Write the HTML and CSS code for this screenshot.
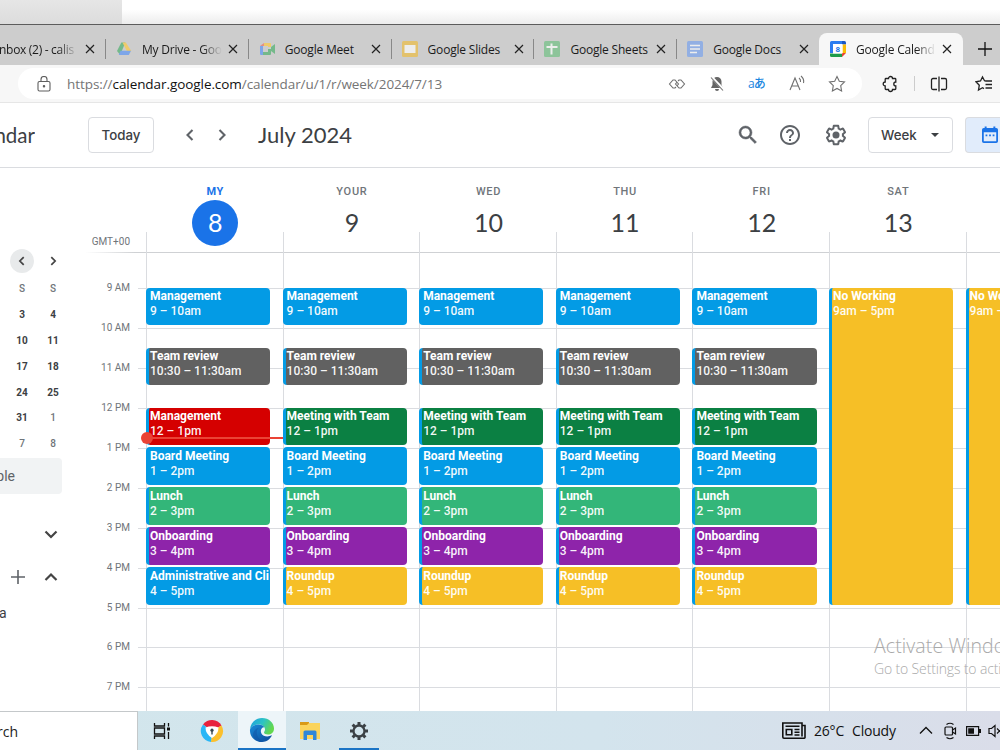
FILE: index.html
```html
<!DOCTYPE html>
<html lang="en">
<head>
  <meta charset="UTF-8" />
  <meta name="viewport" content="width=device-width,initial-scale=1.0"/>
  <title>Google Calendar - July 2024</title>
  <link rel="stylesheet" href="styles.css">
</head>
<body>
  <div class="desktop-strip"><div class="strip-left"></div></div>

  <!-- Browser tabs -->
  <div class="tabs">
    <div class="tab tab-first"><span class="tab-title fade">Inbox (2) - calis</span><svg class="close" viewBox="0 0 10 10"><path d="M1 1l8 8M9 1L1 9"/></svg></div>
    <div class="tab">
      <svg class="favicon" viewBox="0 0 16 16"><path fill="#74b98a" d="M5.3 1.5h4L4.2 14 1 10z"/><path fill="#efcb6b" d="M6.5 1.5h3.300L15.300 10h-4.500z"/><path fill="#7ea6e8" d="M4.600 9.800H15L12.800 14H2.800z"/></svg>
      <span class="tab-title fade">My Drive - Goo</span><svg class="close" viewBox="0 0 10 10"><path d="M1 1l8 8M9 1L1 9"/></svg>
    </div>
    <div class="tab">
      <svg class="favicon" viewBox="0 0 16 16"><path fill="#7ea6e8" d="M1 5h3v9H2a1 1 0 0 1-1-1z"/><path fill="#e58e84" d="M1 5l4-3v3z"/><path fill="#efcb6b" d="M5 2h6a1 1 0 0 1 1 1v3H9V5H5z"/><path fill="#74b98a" d="M12 6l4-3v10l-4-3z"/><path fill="#74b98a" d="M4 11h5V8h3v5a1 1 0 0 1-1 1H4z"/></svg>
      <span class="tab-title">Google Meet</span><svg class="close" viewBox="0 0 10 10"><path d="M1 1l8 8M9 1L1 9"/></svg>
    </div>
    <div class="tab">
      <svg class="favicon" viewBox="0 0 16 16"><rect width="16" height="16" rx="1.500" fill="#e3c26d"/><rect x="2.500" y="4" width="11" height="8" fill="#ededed"/></svg>
      <span class="tab-title">Google Slides</span><svg class="close" viewBox="0 0 10 10"><path d="M1 1l8 8M9 1L1 9"/></svg>
    </div>
    <div class="tab">
      <svg class="favicon" viewBox="0 0 16 16"><rect width="16" height="16" rx="1.500" fill="#8dc49a"/><path d="M7.500 2.500v11M2.500 6h11" stroke="#ededed" stroke-width="2"/></svg>
      <span class="tab-title">Google Sheets</span><svg class="close" viewBox="0 0 10 10"><path d="M1 1l8 8M9 1L1 9"/></svg>
    </div>
    <div class="tab no-line">
      <svg class="favicon" viewBox="0 0 16 16"><rect width="16" height="16" rx="1.500" fill="#92afe3"/><path d="M3 4.500h10M3 8h10M3 11.500h7" stroke="#ededed" stroke-width="1.600"/></svg>
      <span class="tab-title">Google Docs</span><svg class="close" viewBox="0 0 10 10"><path d="M1 1l8 8M9 1L1 9"/></svg>
    </div>
    <div class="tab active">
      <svg class="favicon" viewBox="0 0 16 16"><path fill="#2b7cf0" d="M1.500 0H12v3.500H3.500V12H0V1.500A1.500 1.500 0 0 1 1.500 0z"/><path fill="#1a56c4" d="M12 0h2.500A1.500 1.500 0 0 1 16 1.500v2h-4z"/><path fill="#fbbc04" d="M12.500 3.500H16V12h-3.500z"/><path fill="#1e9c4b" d="M0 12.500h12V16H1.500A1.500 1.500 0 0 1 0 14.500z"/><path fill="#ea4335" d="M12 12h4l-4 4z"/><path fill="#fff" d="M3 3h9.500v9.500H3z"/><text x="7.800" y="11" text-anchor="middle" class="fav-num">8</text></svg>
      <span class="tab-title fade">Google Calend</span><svg class="close" viewBox="0 0 10 10"><path d="M1 1l8 8M9 1L1 9"/></svg>
    </div>
    <svg class="new-tab" viewBox="0 0 14 14"><path d="M7 0v14M0 7h14"/></svg>
  </div>

  <!-- Address bar -->
  <div class="toolbar">
    <div class="address">
      <svg class="lock" viewBox="0 0 14 16"><rect x="1" y="5.500" width="12" height="9.500" rx="1.500"/><path d="M4 5.500V3.500a3 3 0 0 1 6 0v2"/><circle cx="7" cy="10.200" r=".7" class="dot"/></svg>
      <span class="url">https://<b>calendar.google.com</b>/calendar/u/1/r/week/2024/7/13</span>
      <div class="address-icons">
        <svg width="18" height="18" viewBox="0 0 18 18"><path d="M8 12l-1 1H5L1.500 9 5 5h2l3.500 4L9.300 10.500M10 6l1-1h2l3.500 4-3.500 4h-2L7.500 9l1.200-1.500"/></svg>
        <svg width="18" height="18" viewBox="0 0 18 18"><path fill="#666" stroke="none" d="M9 2a4.500 4.500 0 0 1 4.500 4.500V10l1.500 3H3l1.500-3V6.500A4.500 4.500 0 0 1 9 2zM7 14h4a2 2 0 0 1-4 0z"/><path stroke="#fff" stroke-width="2.600" d="M3.500 2L16 15"/><path d="M3 2.500L15 15.500"/></svg>
        <span class="translate">aあ</span>
        <svg width="18" height="18" viewBox="0 0 18 18"><path d="M2 15L7 3l5 12M3.800 11h6.400M11 3q2 1.500 1.500 4M13 1q3.500 3 2.500 7"/></svg>
        <svg width="18" height="18" viewBox="0 0 18 18"><path d="M9 1.500l2.300 4.800 5.200.7-3.800 3.700.9 5.300L9 13.500 4.400 16l.9-5.300L1.500 7l5.200-.7z"/></svg>
      </div>
    </div>
    <div class="toolbar-icons">
      <svg width="18" height="18" viewBox="0 0 18 18"><path d="M5 3.500h2.500a2 2 0 0 1 4 0H14a.8.8 0 0 1 .8.8V7a2 2 0 0 0 0 4v2.700a.8.8 0 0 1-.8.8h-2.500a2 2 0 0 1-4 0H5a.8.8 0 0 1-.8-.8V11a2 2 0 0 1 0-4V4.300a.8.8 0 0 1 .8-.8z"/></svg>
      <i class="divider"></i>
      <svg width="18" height="18" viewBox="0 0 18 18"><path d="M7 3.500H3A1.500 1.500 0 0 0 1.500 5v8A1.500 1.500 0 0 0 3 14.500h4M9 1.500v15M11 3.500h4A1.500 1.500 0 0 1 16.500 5v8a1.500 1.500 0 0 1-1.500 1.500h-4"/></svg>
      <svg width="18" height="18" viewBox="0 0 18 18"><path d="M11 6L9.500 5.700 7.500 2 5.500 6 1 6.800l3.300 3.400L3.500 15l4-2.200 1.500.8M10.500 6H17M10.500 9.500H17M10.500 13H17"/></svg>
    </div>
  </div>

  <!-- Calendar header -->
  <header class="header">
    <div class="logo">Calendar</div>
    <button class="btn btn-today">Today</button>
    <svg class="nav-arrow prev" viewBox="0 0 14 14"><path d="M9.500 2L4.500 7l5 5"/></svg>
    <svg class="nav-arrow next" viewBox="0 0 14 14"><path d="M4.500 2l5 5-5 5"/></svg>
    <h1>July 2024</h1>
    <div class="header-right">
      <svg width="24" height="24" viewBox="0 0 24 24"><path stroke="#5f6368" stroke-width=".5" d="M15.500 14h-.79l-.28-.27A6.471 6.471 0 0 0 16 9.500 6.500 6.500 0 1 0 9.500 16c1.610 0 3.090-.59 4.230-1.570l.27.28v.79l5 4.990L20.490 19l-4.990-5zm-6 0C7.010 14 5 11.990 5 9.500S7.010 5 9.500 5 14 7.010 14 9.500 11.990 14 9.500 14z"/></svg>
      <svg width="24" height="24" viewBox="0 0 24 24"><path d="M11 18h2v-2h-2v2zm1-16C6.480 2 2 6.480 2 12s4.480 10 10 10 10-4.480 10-10S17.520 2 12 2zm0 18c-4.410 0-8-3.590-8-8s3.590-8 8-8 8 3.590 8 8-3.590 8-8 8zm0-14c-2.210 0-4 1.790-4 4h2c0-1.100.9-2 2-2s2 .9 2 2c0 2-3 1.750-3 5h2c0-2.250 3-2.500 3-5 0-2.210-1.790-4-4-4z"/></svg>
      <svg width="24" height="24" viewBox="0 0 24 24"><path d="M13.850 22.250h-3.700c-.74 0-1.360-.54-1.450-1.270l-.27-1.890c-.27-.14-.53-.29-.79-.46l-1.800.72c-.7.26-1.470-.03-1.810-.65L2.200 15.530c-.35-.66-.2-1.440.36-1.880l1.530-1.190c-.01-.15-.02-.3-.02-.46 0-.15.01-.31.02-.46l-1.520-1.190c-.59-.45-.74-1.260-.37-1.880l1.850-3.190c.34-.62 1.110-.9 1.790-.63l1.810.73c.26-.17.52-.32.78-.46l.27-1.910c.09-.7.71-1.250 1.440-1.250h3.700c.74 0 1.360.54 1.450 1.270l.27 1.890c.27.14.53.29.79.46l1.800-.72c.71-.26 1.480.03 1.820.65l1.840 3.180c.36.66.2 1.440-.36 1.880l-1.520 1.190c.01.15.02.3.02.46s-.01.31-.02.46l1.520 1.190c.56.45.72 1.230.37 1.860l-1.860 3.220c-.34.62-1.110.9-1.800.63l-1.800-.72c-.26.17-.52.32-.78.46l-.27 1.910c-.1.680-.72 1.220-1.460 1.220zm-3.230-2h2.760l.37-2.550.53-.22c.44-.18.88-.44 1.340-.78l.45-.34 2.380.96 1.380-2.400-2.030-1.580.07-.56c.03-.26.06-.51.06-.78s-.03-.53-.06-.78l-.07-.56 2.030-1.580-1.390-2.400-2.390.96-.45-.35c-.42-.32-.87-.58-1.330-.77l-.52-.22-.37-2.550h-2.760l-.37 2.550-.53.21c-.44.190-.88.44-1.340.79l-.45.33-2.380-.95-1.390 2.390 2.030 1.580-.07.56a7 7 0 0 0-.06.79c0 .26.02.53.06.78l.07.56-2.030 1.580 1.380 2.400 2.390-.96.45.35c.43.33.86.58 1.330.77l.53.22z"/><circle cx="12" cy="12" r="3.500"/></svg>
      <button class="btn btn-week">Week <i class="caret"></i></button>
      <div class="view-switch"><svg width="16" height="18" viewBox="0 0 18 20"><path d="M3 2V.5h2.200V2h7.600V.5H15V2h1a2 2 0 0 1 2 2v13a2 2 0 0 1-2 2H2a2 2 0 0 1-2-2V4a2 2 0 0 1 2-2zM2 7v10h14V7zM4 9.300h2v2H4zm4 0h2v2H8zm4 0h2v2h-2z" fill-rule="evenodd"/></svg></div>
    </div>
  </header>

  <main class="main">
    <aside class="sidebar">
      <div class="mini-cal">
        <span class="mini-nav on"><svg viewBox="0 0 14 14"><path d="M9 2.500L4.500 7 9 11.500"/></svg></span>
        <span class="mini-nav"><svg viewBox="0 0 14 14"><path d="M5 2.500L9.500 7 5 11.500"/></svg></span>
        <span class="dim">S</span><span class="dim">S</span>
        <span>3</span><span>4</span>
        <span>10</span><span>11</span>
        <span>17</span><span>18</span>
        <span>24</span><span>25</span>
        <span>31</span><span class="dim">1</span>
        <span class="dim">7</span><span class="dim">8</span>
      </div>
      <div class="search-people">Search for people</div>
      <div class="side-row"><svg viewBox="0 0 14 14"><path d="M1.500 4.500L7 10l5.500-5.500"/></svg></div>
      <div class="side-row second"><svg class="plus" viewBox="0 0 14 14"><path d="M7 0v14M0 7h14"/></svg><svg viewBox="0 0 14 14"><path d="M1.500 10L7 4.500l5.500 5.500"/></svg></div>
      <div class="side-name">a</div>
    </aside>

    <section class="week">
      <div class="week-head">
        <div class="gmt">GMT+00</div>
        <div class="day-head today"><span>MY</span><b>8</b></div>
        <div class="day-head"><span>YOUR</span><b>9</b></div>
        <div class="day-head"><span>WED</span><b>10</b></div>
        <div class="day-head"><span>THU</span><b>11</b></div>
        <div class="day-head"><span>FRI</span><b>12</b></div>
        <div class="day-head"><span>SAT</span><b>13</b></div>
        <div class="day-head"></div>
      </div>
      <div class="week-body">
        <div class="hours">
          <div class="hour"><span>9 AM</span><i></i></div>
          <div class="hour"><span>10 AM</span><i></i></div>
          <div class="hour"><span>11 AM</span><i></i></div>
          <div class="hour"><span>12 PM</span><i></i></div>
          <div class="hour"><span>1 PM</span><i></i></div>
          <div class="hour"><span>2 PM</span><i></i></div>
          <div class="hour"><span>3 PM</span><i></i></div>
          <div class="hour"><span>4 PM</span><i></i></div>
          <div class="hour"><span>5 PM</span><i></i></div>
          <div class="hour"><span>6 PM</span><i></i></div>
          <div class="hour"><span>7 PM</span><i></i></div>
        </div>
        <div class="days">
          <div class="day">
            <div class="event at-9 blue"><b>Management</b>9 – 10am</div>
            <div class="event at-1030 gray"><b>Team review</b>10:30 – 11:30am</div>
            <div class="event at-12 red"><b>Management</b>12 – 1pm</div>
            <div class="event at-13 blue"><b>Board Meeting</b>1 – 2pm</div>
            <div class="event at-14 mint"><b>Lunch</b>2 – 3pm</div>
            <div class="event at-15 purple"><b>Onboarding</b>3 – 4pm</div>
            <div class="event at-16 blue"><b>Administrative and Cli</b>4 – 5pm</div>
            <div class="now-line"></div>
          </div>
          <div class="day">
            <div class="event at-9 blue"><b>Management</b>9 – 10am</div>
            <div class="event at-1030 gray"><b>Team review</b>10:30 – 11:30am</div>
            <div class="event at-12 green"><b>Meeting with Team</b>12 – 1pm</div>
            <div class="event at-13 blue"><b>Board Meeting</b>1 – 2pm</div>
            <div class="event at-14 mint"><b>Lunch</b>2 – 3pm</div>
            <div class="event at-15 purple"><b>Onboarding</b>3 – 4pm</div>
            <div class="event at-16 yellow"><b>Roundup</b>4 – 5pm</div>
          </div>
          <div class="day">
            <div class="event at-9 blue"><b>Management</b>9 – 10am</div>
            <div class="event at-1030 gray"><b>Team review</b>10:30 – 11:30am</div>
            <div class="event at-12 green"><b>Meeting with Team</b>12 – 1pm</div>
            <div class="event at-13 blue"><b>Board Meeting</b>1 – 2pm</div>
            <div class="event at-14 mint"><b>Lunch</b>2 – 3pm</div>
            <div class="event at-15 purple"><b>Onboarding</b>3 – 4pm</div>
            <div class="event at-16 yellow"><b>Roundup</b>4 – 5pm</div>
          </div>
          <div class="day">
            <div class="event at-9 blue"><b>Management</b>9 – 10am</div>
            <div class="event at-1030 gray"><b>Team review</b>10:30 – 11:30am</div>
            <div class="event at-12 green"><b>Meeting with Team</b>12 – 1pm</div>
            <div class="event at-13 blue"><b>Board Meeting</b>1 – 2pm</div>
            <div class="event at-14 mint"><b>Lunch</b>2 – 3pm</div>
            <div class="event at-15 purple"><b>Onboarding</b>3 – 4pm</div>
            <div class="event at-16 yellow"><b>Roundup</b>4 – 5pm</div>
          </div>
          <div class="day">
            <div class="event at-9 blue"><b>Management</b>9 – 10am</div>
            <div class="event at-1030 gray"><b>Team review</b>10:30 – 11:30am</div>
            <div class="event at-12 green"><b>Meeting with Team</b>12 – 1pm</div>
            <div class="event at-13 blue"><b>Board Meeting</b>1 – 2pm</div>
            <div class="event at-14 mint"><b>Lunch</b>2 – 3pm</div>
            <div class="event at-15 purple"><b>Onboarding</b>3 – 4pm</div>
            <div class="event at-16 yellow"><b>Roundup</b>4 – 5pm</div>
          </div>
          <div class="day"><div class="event all-day yellow"><b>No Working</b>9am – 5pm</div></div>
          <div class="day"><div class="event all-day yellow"><b>No Working</b>9am – 5pm</div></div>
        </div>
      </div>
      <div class="watermark"><p>Activate Windows</p><small>Go to Settings to activate Windows.</small></div>
    </section>
  </main>

  <!-- Windows taskbar -->
  <footer class="taskbar">
    <div class="task-search">Search</div>
    <div class="task"><svg width="18" height="18" viewBox="0 0 18 18" fill="none" stroke="#111" stroke-width="1.300"><path d="M1.500 1v3h10V1M1.500 6h10v6h-10zM1.500 17v-3h10v3M15.500 1v3.500M15.500 10v7"/><path d="M14 5.500h3v3h-3z" fill="#111" stroke="none"/></svg></div>
    <div class="task wide"><svg width="24" height="24" viewBox="0 0 24 24"><path fill="#e8223c" d="M12 12L3 5.500A11 11 0 0 1 21.500 6.500z"/><path fill="#fbc02d" d="M12 12l9.500-5.500A11 11 0 0 1 11 23z"/><path fill="#29b6f6" d="M12 12L11 23A11 11 0 0 1 3 5.500z"/><path fill="#fff" d="M5.500 8.500Q12 6 18.500 8.500 18.500 15 12 19 5.500 15 5.500 8.500z"/><circle cx="12" cy="11.200" r="1.600" fill="#37474f"/><path d="M11.300 11.500h1.400v4h-1.400z" fill="#37474f"/></svg></div>
    <div class="task current">
      <svg width="26" height="26" viewBox="0 0 26 26">
        <defs>
          <linearGradient id="edgeTop" x1="0" y1="0" x2="1" y2=".4"><stop offset="0" stop-color="#1e9de0"/><stop offset=".55" stop-color="#2cc3c5"/><stop offset="1" stop-color="#63d84e"/></linearGradient>
          <linearGradient id="edgeLow" x1="0" y1="0" x2="1" y2="1"><stop offset="0" stop-color="#1b8bd8"/><stop offset="1" stop-color="#0c4a9a"/></linearGradient>
        </defs>
        <path fill="url(#edgeTop)" d="M1 12.500C1.500 5.500 7 1 13 1c7 0 12 5 12 10.500 0 4-3 6-6 6-2.500 0-4-1-4-2 0-.8 1-1.200 1-3C16 9.500 13 7.500 9.500 7.500 5 7.500 2 10 1 12.500z"/>
        <path fill="url(#edgeLow)" d="M1 12.500C2 9.500 5.500 7.500 9.500 7.500c2.500 0 4.800 1 5.800 2.700C12.500 10 11 13.500 12.300 16.200c1.700 3.200 6.200 4.300 10.700 2.100C21 22.500 17.500 25 13 25 6 25 .5 19.500 1 12.500z"/>
        <path fill="#114f9f" d="M9.800 10.800C7 13 7 18.500 10.500 22c1.500 1.500 3.500 2.500 5 2.700C10 26 3.500 22.500 4 17c.3-3 3-5.500 5.800-6.200z" opacity=".45"/>
      </svg>
    </div>
    <div class="task"><svg width="22" height="20" viewBox="0 0 22 20"><path fill="#d99a17" d="M1 1h9v4H1z"/><path fill="#fbd45c" d="M1 4h7l2-2h11v16H1z"/><path fill="#2f87d8" d="M4.500 11a1.500 1.500 0 0 1 1.500-1.500h10a1.500 1.500 0 0 1 1.500 1.500v8H14v-5H8v5H4.500z"/></svg></div>
    <div class="task open"><svg width="20" height="20" viewBox="0 0 20 20" fill="none" stroke="#3b4145"><circle cx="10" cy="10" r="5.500" stroke-width="2.300"/><path stroke-width="3" d="M10 1v3M10 16v3M1 10h3M16 10h3M3.600 3.600l2.200 2.200M14.200 14.200l2.200 2.200M3.600 16.400l2.200-2.200M14.200 5.800l2.200-2.200"/></svg></div>
    <div class="tray">
      <svg width="24" height="17" viewBox="0 0 24 17" fill="none" stroke="#111" stroke-width="1.600"><path d="M20 3.500h3v12a1 1 0 0 1-1 .7H2a1.200 1.200 0 0 1-1.200-1.200V1H20v13.500"/><path d="M3.500 4.200h14M12.500 7.500h5M12.500 10.200h5M12.500 13h5"/><path d="M4.300 7.500h5.500v5.300H4.300z"/></svg>
      <span class="weather">26°C</span><span class="weather cloudy">Cloudy</span>
      <svg class="tray-up" width="14" height="9" viewBox="0 0 14 9" fill="none" stroke="#111" stroke-width="1.300"><path d="M1 7.500l6-6 6 6"/></svg>
      <svg class="tray-cam" width="13" height="18" viewBox="0 0 13 18" fill="none" stroke="#111" stroke-width="1.200"><rect x="1" y="5" width="7.500" height="8" rx="1"/><path d="M8.500 8l3-2v6l-3-2M2.500 2.500q3.500-2.500 7 0M2.500 15.500q3.500 2.500 7 0"/></svg>
      <svg class="tray-bat" width="15" height="10" viewBox="0 0 15 10"><path d="M.6.6h12v8.800H.6z" fill="none" stroke="#111" stroke-width="1.200"/><path d="M2.200 2.200H8v5.600H2.200zM13 3h2v4h-2z" fill="#111"/></svg>
      <svg class="tray-vol" width="16" height="14" viewBox="0 0 16 14" fill="none" stroke="#111" stroke-width="1.200"><path d="M1 4.500h2.500L7 1.500v11L3.500 9.500H1zM9 4.500l5 5M14 4.500l-5 5"/></svg>
    </div>
  </footer>
</body>
</html>
```

FILE: styles.css
```css
:root {
  --blue: #039be5;
  --google-blue: #1a73e8;
  --text-color: #3c4043;
  --muted: #70757a;
  --line: #dadce0;
  --hour: 39.95px;
  --day: 136.6px;
  --ui-font: 'Open Sans', 'Noto Sans', sans-serif;
}
* { margin: 0; padding: 0; box-sizing: border-box; }
body {
  width: 1000px;
  height: 750px;
  overflow: hidden;
  display: flex;
  flex-direction: column;
  background: #fff;
  font-family: Roboto, sans-serif;
  color: var(--text-color);
}
svg { display: block; flex: none; }

.desktop-strip { height: 25px; flex: none; background: linear-gradient(#fff 40%, #ececec); border-bottom: 1px solid #5c5c5c; }
.strip-left { width: 122px; height: 24px; background: linear-gradient(#e6e6e6, #dcdcdc); }

/* tabs */
.tabs { height: 40px; flex: none; display: flex; background: #cdcdcd; padding-top: 8px; font-family: var(--ui-font); overflow: hidden; }
.tab { width: 142.8px; flex: none; display: flex; align-items: center; padding-left: 10px; position: relative; }
.tab::after { content: ''; position: absolute; right: 0; top: 6px; height: 20px; width: 1px; background: #888; }
.tab.no-line::after, .tab.active::after { display: none; }
.favicon { width: 16px; height: 16px; }
.fav-num { font: bold 8px Roboto, sans-serif; fill: #1a73e8; }
.tab-title { width: 80px; margin-left: 10px; font-size: 12px; letter-spacing: -0.2px; white-space: nowrap; overflow: hidden; color: #1b1b1b; }
.fade { -webkit-mask-image: linear-gradient(90deg, #000 75%, transparent); mask-image: linear-gradient(90deg, #000 75%, transparent); }
.close { width: 10px; height: 10px; margin-left: 6px; fill: none; stroke: #222; stroke-width: 1.2; }
.tab-first { width: 106px; padding: 0; overflow: hidden; }
.tab-first .tab-title { width: 82px; margin-left: -4px; letter-spacing: -0.3px; }
.tab-first .close { margin-left: 7px; }
.active { background: #f7f7f7; border-radius: 8px 8px 0 0; width: 144px; margin-left: -1px; padding-left: 11px; }
.new-tab { width: 14px; height: 14px; margin: 9px 0 0 15px; stroke: #111; stroke-width: 1.3; }

/* address bar */
.toolbar { height: 38px; flex: none; display: flex; align-items: center; background: #f7f7f7; border-bottom: 1px solid #e6e6e6; padding-left: 18px; }
.address { width: 844px; height: 31px; background: #fff; border-radius: 16px; display: flex; align-items: center; padding-left: 19px; }
.lock { width: 14px; height: 16px; fill: none; stroke: #5f5f5f; stroke-width: 1.1; }
.lock .dot { fill: #5f5f5f; }
.url { margin-left: 16px; font-family: var(--ui-font); font-size: 13.5px; color: #757575; letter-spacing: -0.07px; white-space: nowrap; }
.url b { font-weight: 400; color: #111; }
.address-icons { margin-left: auto; margin-right: 16px; display: flex; align-items: center; gap: 22px; }
.address-icons svg { fill: none; stroke: #707070; stroke-width: 1.1; }
.translate { width: 18px; font: 500 12px/18px 'Open Sans', 'Noto Sans CJK JP', sans-serif; color: #1a86e0; letter-spacing: -1px; white-space: nowrap; }
.toolbar-icons { display: flex; align-items: center; margin-left: 19px; }
.toolbar-icons svg { fill: none; stroke: #222; stroke-width: 1.3; }
.toolbar-icons svg:last-child { margin-left: 27px; }
.divider { width: 1px; height: 15px; background: #ccc; margin: 0 15px 0 15px; }

/* calendar header */
.header { height: 65px; flex: none; display: flex; align-items: center; border-bottom: 1px solid var(--line); font-family: Lato, sans-serif; }
.logo { width: 35px; display: flex; justify-content: flex-end; overflow: hidden; font-size: 20.5px; white-space: nowrap; }
.btn { height: 36px; border: 1px solid var(--line); border-radius: 4px; background: #fff; font: 500 14px Inter, sans-serif; color: var(--text-color); }
.btn-today { width: 66px; margin-left: 53px; font-size: 13.3px; }
.nav-arrow { width: 14px; height: 14px; fill: none; stroke: #5f6368; stroke-width: 2.1; }
.prev { margin-left: 29px; }
.next { margin-left: 18px; }
.header h1 { margin-left: 29px; padding-bottom: 2px; font-size: 22px; font-weight: 400; white-space: nowrap; }
.header-right { margin-left: auto; display: flex; align-items: center; fill: #5f6368; }
.header-right > svg + svg { margin-left: 18px; }
.header-right > svg:nth-child(3) { margin-left: 22px; }
.btn-week { width: 85px; margin-left: 20px; display: flex; align-items: center; padding-left: 12px; font-size: 13.3px; }
.caret { border: 4px solid transparent; border-top-color: var(--text-color); border-bottom: 0; margin-left: 14px; }
.view-switch { width: 35px; height: 36px; margin-left: 12px; background: #e1ecfb; border: 1px solid var(--line); border-right: 0; border-radius: 4px 0 0 4px; display: flex; align-items: center; padding-left: 16px; overflow: hidden; fill: var(--google-blue); }

.main { flex: 1; min-height: 0; display: flex; overflow: hidden; }

/* sidebar */
.sidebar { width: 75px; flex: none; padding-top: 80px; }
.mini-cal { display: grid; grid-template-columns: 31px 31px; grid-template-rows: 28px; grid-auto-rows: 25.9px; padding-left: 6.5px; font-size: 10px; font-weight: 700; text-align: center; line-height: 26px; }
.mini-cal .dim { font-weight: 500; color: var(--muted); }
.mini-nav { display: flex; align-items: center; justify-content: center; width: 24px; height: 24px; margin: 1px auto; border-radius: 50%; }
.mini-nav.on { background: #e8eaeb; }
.mini-nav svg { width: 12px; height: 12px; fill: none; stroke: #444; stroke-width: 2; }
.search-people { width: 62px; height: 36px; margin-top: 1px; background: #f1f3f4; border-radius: 0 4px 4px 0; display: flex; justify-content: flex-end; align-items: center; padding-right: 47px; font-size: 14px; white-space: nowrap; color: #5f6368; }
.side-row { display: flex; justify-content: flex-end; align-items: center; margin-top: 33px; padding-right: 17px; gap: 19px; }
.side-row svg { width: 14px; height: 14px; fill: none; stroke: #444; stroke-width: 2.2; }
.side-row .plus { stroke-width: 1.6; stroke: #5f6368; }
.side-row.second { margin-top: 29px; }
.side-name { font-size: 14px; margin-top: 20px; line-height: 18px; margin-left: -1px; }

/* week view */
.week { flex: 1; min-width: 0; position: relative; overflow: hidden; }
.week-head { height: 85px; width: 1030px; display: flex; background: linear-gradient(90deg, transparent 10px, #cfd1d4 60px) bottom / 100% 1px no-repeat; }
.gmt { width: 71px; flex: none; align-self: flex-end; padding: 0 16px 4px 0; text-align: right; font-size: 10px; line-height: 14px; color: var(--muted); }
.day-head { width: var(--day); flex: none; padding: 17px 0 0 2px; display: flex; flex-direction: column; align-items: center; background: linear-gradient(var(--line), var(--line)) left bottom / 1px 21px no-repeat; }
.day-head span { font-size: 11px; font-weight: 500; line-height: 14px; letter-spacing: 0.7px; color: var(--muted); }
.day-head b { width: 46px; height: 46px; margin-top: 1px; border-radius: 50%; font: 400 25px/44px Lato, sans-serif; text-align: center; }
.today span { color: var(--google-blue); font-weight: 700; }
.today b { background: var(--google-blue); color: #fff; }

.week-body { display: grid; height: 460px; }
.hours, .days { grid-area: 1 / 1; padding-top: 35px; }
.hour { height: var(--hour); display: flex; }
.hour span { width: 55px; margin-top: -7px; text-align: right; font-size: 10px; line-height: 14px; height: 14px; color: var(--muted); }
.hour i { flex: 1; margin-left: 8px; border-top: 1px solid var(--line); }
.days { display: flex; padding: 0 0 0 71px; }
.day { width: var(--day); flex: none; border-left: 1px solid var(--line); padding-top: 34.7px; display: grid; grid-template-rows: repeat(16, calc(var(--hour) / 2)); align-content: start; position: relative; }
.event {
  grid-row: span 2; height: 37.6px; margin: 0 12.4px 0 -1px; padding: 1.4px 0 0 1px;
  border-left: 3px solid var(--blue); border-radius: 4px; overflow: hidden; white-space: nowrap;
  font-size: 12px; line-height: 15px; color: rgba(255,255,255,0.95); font-weight: 500; letter-spacing: 0;
}
.event b { display: block; font-weight: 700; letter-spacing: 0; color: #fff; }
.at-9 { grid-row-start: 1; }
.at-1030 { grid-row-start: 4; }
.at-12 { grid-row-start: 7; }
.at-13 { grid-row-start: 9; }
.at-14 { grid-row-start: 11; }
.at-15 { grid-row-start: 13; }
.at-16 { grid-row-start: 15; }
.event.all-day { grid-row: 1 / span 16; height: auto; margin-bottom: 2.3px; }
.blue { background: var(--blue); }
.gray { background: #616161; }
.red { background: #d50000; }
.green { background: #0b8043; }
.mint { background: #33b679; }
.purple { background: #8e24aa; }
.yellow { background: #f6bf26; }
.now-line { position: absolute; left: 0; right: -1px; top: 184px; height: 2px; background: #ea4335; }
.now-line::before { content: ''; position: absolute; left: -6px; top: -5px; width: 12px; height: 12px; border-radius: 50%; background: #ea4335; }

.watermark { position: absolute; left: 799px; top: 465px; font-family: var(--ui-font); font-weight: 300; color: #a9a9a9; white-space: nowrap; }
.watermark p { font-size: 19.5px; line-height: 26px; letter-spacing: 0.1px; }
.watermark small { display: block; font-size: 14px; line-height: 20px; letter-spacing: -0.15px; }

/* taskbar */
.taskbar { height: 39px; flex: none; display: flex; background: linear-gradient(90deg, #d2e6ec, #d3e4ed 60%, #dadde9); font-family: var(--ui-font); }
.task-search { width: 138px; background: #fff; border: 1px solid #c4c8ca; border-left: 0; border-bottom: 0; display: flex; justify-content: flex-end; align-items: center; padding-right: 119px; font-size: 14px; color: #222; overflow: hidden; white-space: nowrap; }
.task { width: 48px; display: flex; align-items: center; justify-content: center; }
.task.wide { width: 52px; }
.current { background: #edf5f9; border-bottom: 2px solid #1b74c5; }
.open { background: linear-gradient(#1b74c5, #1b74c5) center bottom / 40px 2px no-repeat; width: 50px; }
.tray { margin-left: auto; display: flex; align-items: center; width: 218px; overflow: hidden; }
.weather { margin-left: 8px; font-size: 14px; letter-spacing: -0.2px; color: #111; }
.cloudy { margin-left: 8px; }
.tray-up { margin-left: 23px; }
.tray-cam { margin-left: 11px; }
.tray-bat { margin-left: 9px; }
.tray-vol { margin-left: 7px; }
```
